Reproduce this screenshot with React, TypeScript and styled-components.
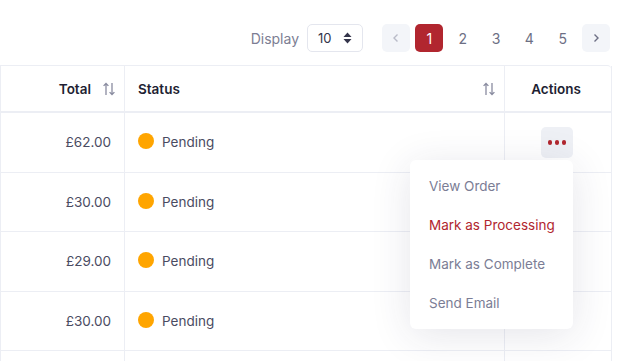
import React from 'react'
import styled, { createGlobalStyle } from 'styled-components'

const GlobalStyle = createGlobalStyle`
  body {
    margin: 0;
    background: #ffffff;
    font-family: Inter, "Noto Sans", sans-serif;
  }
`

const Page = styled.div`
  width: 631px;
  height: 361px;
  overflow: hidden;
  padding: 24px 20px 0 0;
  box-sizing: border-box;
`

const Toolbar = styled.div`
  display: flex;
  justify-content: flex-end;
  align-items: center;
  height: 28px;
  margin-bottom: 13px;
  padding-right: 1px;
`

const DisplayLabel = styled.span`
  font-size: 14px;
  color: #7c7e93;
  margin-right: 8px;
`

const Select = styled.div`
  display: flex;
  align-items: center;
  justify-content: space-between;
  width: 56px;
  height: 28px;
  box-sizing: border-box;
  padding: 0 10px 0 10px;
  border: 1px solid #e4e6ee;
  border-radius: 5px;
  font-size: 13px;
  color: #33344a;
  margin-right: 19px;
`

const Pager = styled.div`
  display: flex;
  align-items: center;
  gap: 5.33px;
`

const PageArrow = styled.div`
  width: 28px;
  height: 28px;
  border-radius: 5px;
  background: #f3f5f9;
  display: flex;
  align-items: center;
  justify-content: center;
`

const PageNum = styled.div<{ $active?: boolean }>`
  width: 28px;
  height: 28px;
  border-radius: 5px;
  display: flex;
  align-items: center;
  justify-content: center;
  font-size: 14px;
  background: ${({ $active }) => ($active ? '#b1262f' : 'transparent')};
  color: ${({ $active }) => ($active ? '#ffffff' : '#6d6f84')};
`

const Table = styled.div`
  display: grid;
  grid-template-columns: 124px 380px 107px;
  border-top: 1px solid #eceef4;
  border-left: 1px solid #eceef4;
  border-top-right-radius: 4px;
`

const HeadCell = styled.div<{ $align: 'left' | 'right' | 'center' }>`
  height: 47px;
  box-sizing: border-box;
  display: flex;
  align-items: center;
  justify-content: ${({ $align }) =>
    $align === 'right' ? 'flex-end' : $align === 'center' ? 'center' : 'space-between'};
  padding: ${({ $align }) => ($align === 'center' ? '0 4px 0 0' : '0 8px 0 13px')};
  border-right: 1px solid #eceef4;
  border-bottom: 2px solid #eceef4;
  font-size: 13.5px;
  font-weight: 600;
  color: #1e1f33;
  gap: 11px;
`

const Cell = styled.div<{ $align: 'left' | 'right' | 'center' }>`
  position: relative;
  height: 59.5px;
  box-sizing: border-box;
  display: flex;
  align-items: center;
  justify-content: ${({ $align }) =>
    $align === 'right' ? 'flex-end' : $align === 'center' ? 'center' : 'flex-start'};
  padding: 0 13px;
  border-right: 1px solid #eceef4;
  border-bottom: 1px solid #eceef4;
  font-size: 13.5px;
  color: #4a4b62;
`

const Dot = styled.span`
  width: 16px;
  height: 16px;
  border-radius: 50%;
  background: #ffa500;
  margin-right: 8px;
  margin-top: -2px;
`

const MoreButton = styled.div`
  width: 32px;
  height: 31px;
  border-radius: 5px;
  background: #eef0f5;
  display: flex;
  align-items: center;
  justify-content: center;
  gap: 2.5px;
  margin-right: 2px;
`

const MoreDot = styled.span`
  width: 4.5px;
  height: 4.5px;
  border-radius: 50%;
  background: #b1262f;
`

const Menu = styled.div`
  position: absolute;
  top: 47px;
  right: 38px;
  width: 163px;
  padding: 6px 0 7px;
  background: #ffffff;
  border-radius: 6px;
  box-shadow: 0 6px 40px rgba(40, 45, 80, 0.12);
  z-index: 5;
`

const MenuItem = styled.div<{ $active?: boolean }>`
  height: 39px;
  display: flex;
  align-items: center;
  padding-left: 19px;
  font-size: 13.5px;
  color: ${({ $active }) => ($active ? '#b1262f' : '#7b7d95')};
  white-space: nowrap;
`

const SortIcon = () => (
  <svg width="14" height="14" viewBox="0 0 14 14" fill="none" stroke="#8a8ca0" strokeWidth="1.3">
    <path d="M4 13V1.5M1.6 3.9L4 1.5l2.4 2.4" />
    <path d="M10 1v11.5M7.6 10.1L10 12.5l2.4-2.4" />
  </svg>
)

const Chevron = ({ dir }: { dir: 'left' | 'right' }) => (
  <svg width="10" height="10" viewBox="0 0 10 10" fill="none" stroke={dir === 'left' ? '#b9bbc8' : '#6d6f84'} strokeWidth="1.4">
    <path d={dir === 'left' ? 'M6.5 1.5L3 5l3.5 3.5' : 'M3.5 1.5L7 5 3.5 8.5'} />
  </svg>
)

const Caret = () => (
  <svg width="9" height="12" viewBox="0 0 9 12" fill="#33344a">
    <path d="M4.5 0.5L8.5 5H0.5Z" />
    <path d="M4.5 11.5L8.5 7H0.5Z" />
  </svg>
)

// the fifth row only peeks in at the bottom edge
const rows = ['£62.00', '£30.00', '£29.00', '£30.00', '']

export default function App() {
  return (
    <>
      <GlobalStyle />
      <Page>
        <Toolbar>
          <DisplayLabel>Display</DisplayLabel>
          <Select>
            <span>10</span>
            <Caret />
          </Select>
          <Pager>
            <PageArrow>
              <Chevron dir="left" />
            </PageArrow>
            <PageNum $active>1</PageNum>
            <PageNum>2</PageNum>
            <PageNum>3</PageNum>
            <PageNum>4</PageNum>
            <PageNum>5</PageNum>
            <PageArrow>
              <Chevron dir="right" />
            </PageArrow>
          </Pager>
        </Toolbar>
        <Table>
          <HeadCell $align="right">
            <span>Total</span>
            <SortIcon />
          </HeadCell>
          <HeadCell $align="left">
            <span>Status</span>
            <SortIcon />
          </HeadCell>
          <HeadCell $align="center">Actions</HeadCell>
          {rows.map((amount, i) => (
            <React.Fragment key={i}>
              <Cell $align="right">{amount}</Cell>
              <Cell $align="left">
                {amount && (
                  <>
                    <Dot />
                    Pending
                  </>
                )}
              </Cell>
              <Cell $align="center">
                {i === 0 && (
                  <>
                    <MoreButton>
                      <MoreDot />
                      <MoreDot />
                      <MoreDot />
                    </MoreButton>
                    <Menu>
                      <MenuItem>View Order</MenuItem>
                      <MenuItem $active>Mark as Processing</MenuItem>
                      <MenuItem>Mark as Complete</MenuItem>
                      <MenuItem>Send Email</MenuItem>
                    </Menu>
                  </>
                )}
              </Cell>
            </React.Fragment>
          ))}
        </Table>
      </Page>
    </>
  )
}
